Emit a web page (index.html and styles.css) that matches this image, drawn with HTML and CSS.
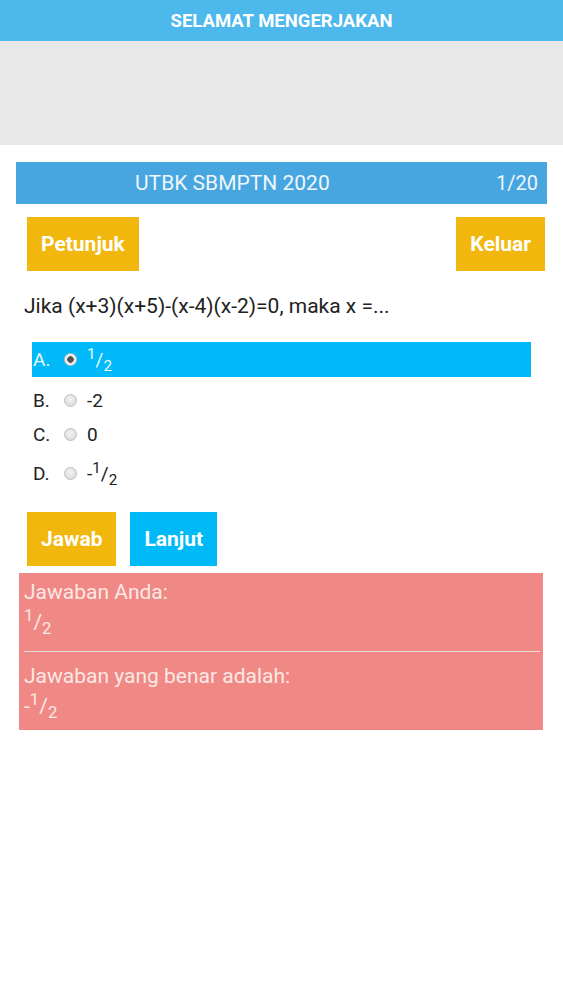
FILE: index.html
```html
<!DOCTYPE html>
<html lang="id">
<head>
<meta charset="utf-8">
<title>UTBK SBMPTN 2020</title>
<link rel="stylesheet" href="styles.css">
</head>
<body>
<div class="topbar">SELAMAT MENGERJAKAN</div>
<div class="banner"></div>
<main class="content">
  <div class="header">
    <span class="header-title">UTBK SBMPTN 2020</span>
    <span class="header-count">1/20</span>
  </div>
  <div class="toolbar">
    <button class="btn btn-yellow">Petunjuk</button>
    <button class="btn btn-yellow">Keluar</button>
  </div>
  <p class="question">Jika (x+3)(x+5)-(x-4)(x-2)=0, maka x =...</p>
  <ul class="options">
    <li class="option selected"><span class="letter">A.</span><span class="radio checked"></span><span class="value"><sup>1</sup>/<sub>2</sub></span></li>
    <li class="option"><span class="letter">B.</span><span class="radio"></span><span class="value">-2</span></li>
    <li class="option"><span class="letter">C.</span><span class="radio"></span><span class="value">0</span></li>
    <li class="option option-tall"><span class="letter">D.</span><span class="radio"></span><span class="value">-<sup>1</sup>/<sub>2</sub></span></li>
  </ul>
  <div class="actions">
    <button class="btn btn-yellow">Jawab</button>
    <button class="btn btn-blue">Lanjut</button>
  </div>
  <div class="result">
    <div class="result-label">Jawaban Anda:</div>
    <div class="result-value"><sup>1</sup>/<sub>2</sub></div>
    <hr class="divider">
    <div class="result-label">Jawaban yang benar adalah:</div>
    <div class="result-value">-<sup>1</sup>/<sub>2</sub></div>
  </div>
</main>
</body>
</html>
```

FILE: styles.css
```css
* { box-sizing: border-box; }
html, body { margin: 0; padding: 0; background: #ffffff; }
body {
  font-family: Roboto, "Liberation Sans", Arial, sans-serif;
  color: #222222;
  width: 563px;
}
.topbar {
  height: 41px;
  background: #4db8ec;
  color: #ffffff;
  font-weight: bold;
  font-size: 18.5px;
  display: flex;
  align-items: center;
  justify-content: center;
}
.banner {
  height: 104px;
  background: #e9e8e9;
}
.content {
  padding: 17px 16px 0 16px;
}
.header {
  height: 42px;
  background: #47a6df;
  color: #eef6fc;
  font-size: 21px;
  display: flex;
  align-items: center;
  justify-content: space-between;
  padding: 0 9px 0 119px;
}
.header-count { font-size: 20px; }
.toolbar {
  display: flex;
  justify-content: space-between;
  padding: 13px 2px 0 11px;
}
.btn {
  border: none;
  margin: 0;
  height: 54px;
  padding: 0 14px;
  font-family: Roboto, "Liberation Sans", Arial, sans-serif;
  font-weight: bold;
  font-size: 21px;
  color: #ffffff;
}
.btn-yellow { background: #f2b70d; }
.btn-blue { background: #00baf7; }
.question {
  margin: 0;
  padding: 22px 0 0 8px;
  font-size: 21px;
  line-height: 26px;
}
.options {
  list-style: none;
  margin: 0;
  padding: 23px 0 0 0;
}
.option {
  display: flex;
  align-items: center;
  height: 34px;
  font-size: 19px;
  margin: 0 16px;
  padding-left: 1px;
}
.option.selected {
  height: 35px;
  background: #00b9f9;
  color: #e8f8ff;
  margin-bottom: 6px;
}
.option.option-tall { height: 44px; }
.letter { width: 31px; }
.radio {
  width: 13px;
  height: 13px;
  border-radius: 50%;
  border: 1px solid #bdbdbd;
  background: radial-gradient(circle at 50% 40%, #f2f2f2, #d6d6d6);
  margin-right: 10px;
}
.radio.checked {
  background: radial-gradient(circle, #555555 0 3px, #eeeeee 3.5px);
  border-color: #c8c8c8;
}
.value sup, .result-value sup {
  font-size: 0.8em;
  vertical-align: 0.45em;
  line-height: 0;
}
.value sub, .result-value sub {
  font-size: 0.8em;
  vertical-align: -0.3em;
  line-height: 0;
}
.actions {
  display: flex;
  gap: 14px;
  padding: 17px 0 0 11px;
}
.result {
  margin: 7px 4px 0 3px;
  background: #f08886;
  color: #fce8e5;
  padding: 7px 3px 9px 5px;
  font-size: 21px;
}
.result-label { line-height: 24px; }
.result-value { line-height: 30px; padding-top: 3px; }
.divider {
  border: none;
  border-top: 1px solid #e6dcdc;
  margin: 14px 0 12px 0;
}
```
